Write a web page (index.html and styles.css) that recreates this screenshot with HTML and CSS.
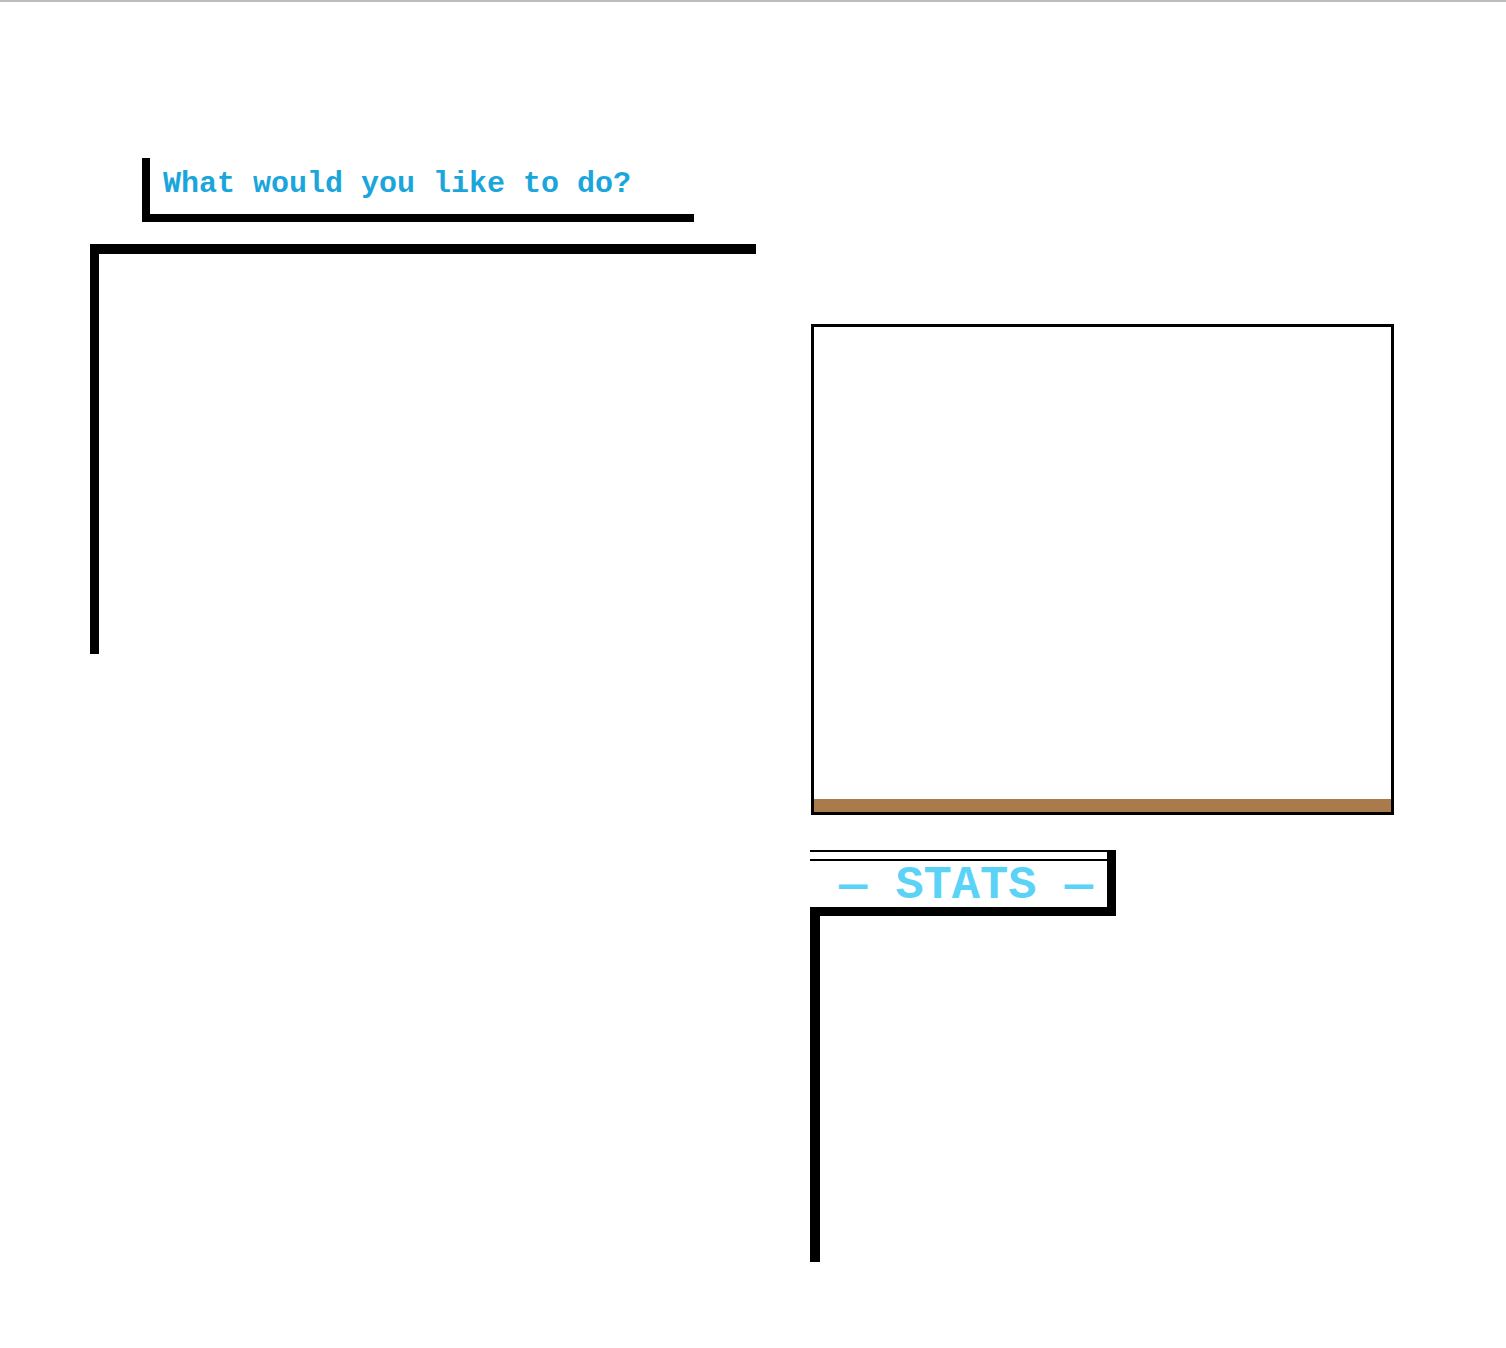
FILE: index.html
```html
<!DOCTYPE html>
<html lang="en">
<head>
  <meta charset="UTF-8" />
  <title>Game</title>
  <link rel="stylesheet" href="styles.css">
</head>
<body>
  <div class="topbar"></div>

  <div class="layout">
    <!-- Actions column -->
    <div class="left-col">
      <div class="prompt">
        <span class="prompt-text">What would you like to do?</span>
      </div>
      <div class="actions-panel"></div>
    </div>

    <!-- Scene + stats column -->
    <div class="right-col">
      <div class="scene">
        <div class="scene-ground"></div>
      </div>

      <div class="stats-head">
        <div class="stats-title">&mdash; STATS &mdash;</div>
      </div>
      <div class="stats-panel"></div>
    </div>
  </div>
</body>
</html>
```

FILE: styles.css
```css
body {
  background: #fff;
  margin: 0;
  padding: 0;
  font-family: 'Courier New', 'Nimbus Mono PS', 'FreeMono', 'Liberation Mono', monospace;
}

.topbar {
  height: 2px;
  background: #bdbdbd;
}

.layout {
  display: flex;
}

.left-col {
  width: 810px;
  flex-shrink: 0;
  padding-top: 156px;
}

.prompt {
  margin-left: 142px;
  width: 531px;
  height: 45px;
  border-left: 8px solid #000;
  border-bottom: 8px solid #000;
  padding: 11px 0 0 13px;
}

.prompt-text {
  display: block;
  color: #1ba6db;
  font-size: 30px;
  font-weight: bold;
  line-height: 30px;
  white-space: nowrap;
}

.actions-panel {
  margin-top: 22px;
  margin-left: 90px;
  width: 657px;
  height: 400px;
  border-top: 10px solid #000;
  border-left: 9px solid #000;
}

.right-col {
  padding-top: 322px;
}

.scene {
  margin-left: 1px;
  width: 577px;
  height: 485px;
  border: 3px solid #000;
  display: flex;
  flex-direction: column;
  justify-content: flex-end;
}

.scene-ground {
  height: 13px;
  background: #a97a4b;
}

.stats-head {
  margin-top: 35px;
  width: 297px;
  border-top: 2px solid #000;
  border-right: 9px solid #000;
  border-bottom: 9px solid #000;
}

.stats-title {
  margin-top: 7px;
  border-top: 2px solid #000;
  height: 44px;
  padding: 2px 0 0 29px;
  color: #5ad3f7;
  font-size: 47px;
  font-weight: bold;
  line-height: 46px;
  white-space: nowrap;
}

.stats-panel {
  height: 346px;
  border-left: 10px solid #000;
}
```
